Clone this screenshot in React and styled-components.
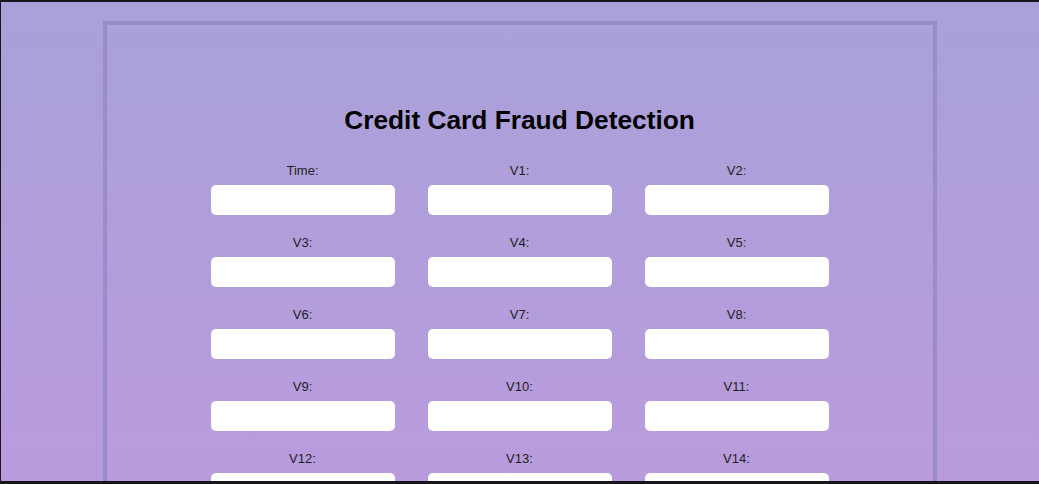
import React from 'react';
import styled, { createGlobalStyle } from 'styled-components';

const GlobalStyle = createGlobalStyle`
  html {
    scrollbar-width: none;
  }
  html::-webkit-scrollbar {
    display: none;
  }
  body {
    margin: 0;
    min-height: 100vh;
    font-family: 'Liberation Sans', Arial, sans-serif;
    background: linear-gradient(180deg, #a9a1d9 0px, #b99bdd 484px) no-repeat;
    background-color: #b99bdd;
  }
`

export const Moldura = styled.div`
  position: fixed;
  inset: 0;
  pointer-events: none;
  border-top: 2px solid #16161b;
  border-left: 1px solid #16161b;
  border-bottom: 3px solid #16161b;
  z-index: 10;
`

export const Pagina = styled.div`
  padding-top: 21px;
`

export const Quadro = styled.div`
  box-sizing: border-box;
  width: 834px;
  margin: 0 auto;
  border: 4px solid #9a8bca;
  padding: 80px 0 40px;
  display: flex;
  flex-direction: column;
  align-items: center;
`

export const Titulo = styled.h1`
  margin: 0 0 28px;
  font-size: 26.3px;
  line-height: 30px;
  font-weight: bold;
  color: #000;
`

export const Formulario = styled.form`
  display: grid;
  grid-template-columns: repeat(3, 184px);
  column-gap: 33px;
  row-gap: 20px;
`

export const Campo = styled.div`
  display: flex;
  flex-direction: column;
  align-items: center;
`

export const Rotulo = styled.label`
  font-size: 13px;
  line-height: 15px;
  color: #1e1e24;
  margin-bottom: 7px;
`

export const Entrada = styled.input`
  box-sizing: border-box;
  width: 184px;
  height: 30px;
  border: none;
  border-radius: 5px;
  background: #fff;
  padding: 0 8px;
  font-family: inherit;
  font-size: 13px;
  outline: none;
`

const campos = ['Time', ...Array.from({ length: 28 }, (_, i) => `V${i + 1}`), 'Amount'];

const App = () => {
  return (
    <>
      <GlobalStyle />
      <Moldura />
      <Pagina>
        <Quadro>
          <Titulo>Credit Card Fraud Detection</Titulo>
          <Formulario onSubmit={(e) => e.preventDefault()}>
            {campos.map((nome) => (
              <Campo key={nome}>
                <Rotulo htmlFor={nome}>{nome}:</Rotulo>
                <Entrada id={nome} name={nome} type="text" />
              </Campo>
            ))}
          </Formulario>
        </Quadro>
      </Pagina>
    </>
  );
};

export default App;
